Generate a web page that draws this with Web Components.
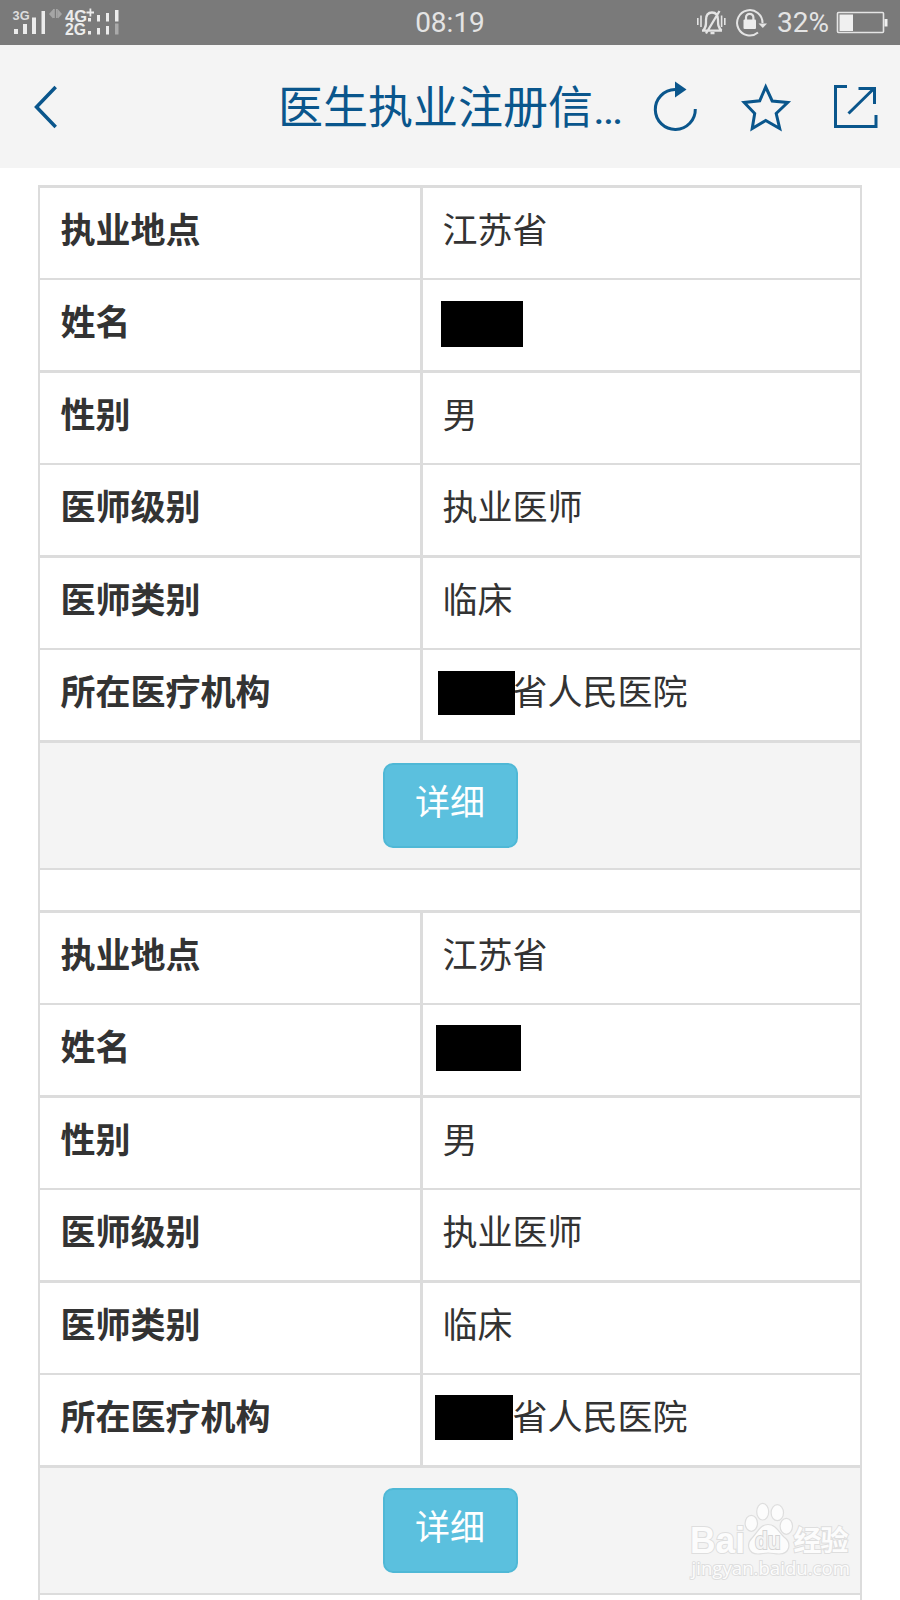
<!DOCTYPE html>
<html lang="zh-CN">
<head>
<meta charset="utf-8">
<title>医生执业注册信息</title>
<style>
html, body { margin: 0; height: 1600px; overflow: hidden; background: #fff; }
body { font-family: Roboto, "Noto Sans CJK SC", sans-serif; color: #333; }
</style>
</head>
<body>
<phone-screen>
  <status-bar slot="top" time="08:19" battery="32%"></status-bar>
  <nav-bar slot="top">医生执业注册信…</nav-bar>
  <record-list>
    <doctor-record></doctor-record>
    <doctor-record second></doctor-record>
  </record-list>
  <baidu-mark slot="mark"></baidu-mark>
</phone-screen>
<script>
class Base extends HTMLElement {
  connectedCallback() {
    if (!this.shadowRoot) this.attachShadow({ mode: 'open' }).innerHTML = this.view();
  }
}

customElements.define('phone-screen', class extends Base {
  view() { return `<style>
    :host { display: flex; flex-direction: column; width: 900px; height: 1600px; overflow: hidden; position: relative; }
    main { padding: 17px 38px 0; }
    ::slotted([slot=mark]) { position: absolute; left: 686px; top: 1500px; }
  </style><slot name="top"></slot><main><slot></slot></main><slot name="mark"></slot>`; }
});

customElements.define('status-bar', class extends Base {
  view() { return `<style>
    :host { display: grid; grid-template-columns: 1fr auto 1fr; height: 45px; flex: none; background: #7a7a7a; color: #e4e4e4; font: 28px/46px Roboto, sans-serif; }
    svg { display: block; }
    .right { display: flex; justify-content: flex-end; }
  </style>
  <svg width="200" height="45" fill="#ececec" font-family="Liberation Sans, sans-serif" font-weight="bold">
    <text x="12.600" y="20" font-size="12" textLength="17" lengthAdjust="spacingAndGlyphs" fill="#ddd">3G</text>
    <path d="M14 29h4v5h-4zM23 24h4v10h-4zM32 17.500h4v16.500h-4zM41.500 11h3.500v23h-3.500z"/>
    <path fill="#a5a5a5" d="M49 14l4-4.500v9zM53 9h1.800v9h-1.800zM56 9h1.800v9h-1.800zM58 9.500l4 4.500-4 4.500z"/>
    <text x="65" y="21.500" font-size="16" textLength="22" lengthAdjust="spacingAndGlyphs">4G</text>
    <text x="65" y="35" font-size="16" textLength="21" lengthAdjust="spacingAndGlyphs">2G</text>
    <path d="M86.500 11.500h3v-3h1.800v3h2.700v2h-2.700v3h-1.800v-3h-3zM88 18h3v3.500h-3zM88 31h3v3.500h-3zM97 15h3v6.500h-3zM97 28h3v6.500h-3zM106 13h3v8.500h-3zM106 26h3v8.500h-3zM115 10h3.500v11.500h-3.500z"/>
    <path fill="#aaa" d="M115 23.500h3.500v11h-3.500z"/>
  </svg>
  <span>${this.getAttribute('time')}</span>
  <div class="right">
    <svg width="80" height="45" fill="none" stroke="#e4e4e4" stroke-width="1.700">
      <path d="M.8 18v7M4 15.500v11.500M27.800 18v7M24.600 15.500v11.500" stroke-width="1.600"/>
      <path d="M5 30.700h20M6 30.500c3.500-3.500 3-6 3-10.500q0-7.500 6-7.500t6 7.500c0 4.500 0 7 3.500 10.500M9 33.500L22.500 11M13.500 33.200h4" stroke-width="2.300"/>
      <path d="M65.500 23a12.700 12.700 0 1 0-4.500 9.500" stroke-width="2"/>
      <path d="M61.500 23.500h8.500l-4.200 4.500z" fill="#e4e4e4" stroke="none"/>
      <path d="M49 20v-2.500a3.700 3.700 0 0 1 7.400 0v2.500" stroke-width="2.200"/>
      <rect x="46.500" y="19.500" width="12.500" height="9.500" rx="1" fill="#ececec" stroke="none"/>
    </svg>
    <span>${this.getAttribute('battery')}</span>
    <svg width="71" height="45"><rect x="8.500" y="12.500" width="46" height="20" rx="1" fill="none" stroke="#e4e4e4" stroke-width="1.600"/><path fill="#f0f0f0" d="M10.500 14.500H24v16.500H10.500zM55.500 19h3v7.500h-3z"/></svg>
  </div>`; }
});

customElements.define('nav-bar', class extends Base {
  view() { return `<style>
    :host { display: flex; height: 123px; flex: none; background: #f4f4f4; color: #0a568c; font: 45px/127px Roboto, "Noto Sans CJK SC", sans-serif; }
    svg { display: block; fill: none; stroke: #0a568c; flex: none; }
    .t { width: 352px; white-space: nowrap; }
  </style>
  <svg width="278" height="123"><path d="M55.700 42L36.500 62l19.200 20" stroke-width="3.500"/></svg>
  <div class="t"><slot></slot></div>
  <svg width="270" height="123" stroke-width="3">
    <path d="M45 44.500a20 20 0 1 0 20.300 19.500"/>
    <path d="M45 36.500v16l11.500-8z" fill="#0a568c" stroke="none"/>
    <path d="M135.700 42l6.500 14 15.500 1.500-11.500 11 3.500 15-14-8-13.500 8 2.500-15-10.500-11 15.500-1.700z"/>
    <path d="M217 41.500h-11.500v40h40.500V70M228.500 43.500h16V59M218.500 68.500L244 43.500"/>
  </svg>`; }
});

customElements.define('record-list', class extends Base {
  view() { return `<style>
    :host { display: flex; flex-direction: column; gap: 42.5px; height: 1440px; background: #fff; box-sizing: border-box; border: 2px solid #dcdcdc; border-width: 0 2px; }
  </style><slot></slot>`; }
});

customElements.define('doctor-record', class extends Base {
  view() {
    const s = this.hasAttribute('second');
    const rows = [['执业地点', '江苏省'], ['姓名', s ? 'n2' : 'n1'], ['性别', '男'], ['医师级别', '执业医师'], ['医师类别', '临床'], ['所在医疗机构', '省人民医院']];
    return `<style>
    :host { display: grid; gap: 2.5px; padding: 2.5px 0; background: #dcdcdc; margin-bottom: -2.5px; }
    .row { display: grid; grid-template-columns: 380px 1fr; gap: 2.5px; height: 90px; }
    .c { position: relative; background: #fff; box-sizing: border-box; padding: 19px 20px 0; font-size: 35px; line-height: 50px; white-space: nowrap; }
    .k { font-weight: 700; padding-left: 20.4px; }
    .org { padding-left: 90px; }
    i { position: absolute; background: #000; }
    .n1 { left: 18.5px; top: 21px; width: 82px; height: 46px; }
    .n2 { left: 13.5px; top: 20px; width: 85px; height: 46px; }
    .o1 { left: 15.5px; top: 21px; width: 77px; height: 44px; }
    .o2 { left: 12.5px; top: 20px; width: 78px; height: 45px; }
    .foot { display: flex; justify-content: center; align-items: center; height: 125px; background: #f4f4f4; }
  </style>` + rows.map(([k, v], n) => {
      const val = n === 1 ? `<i class="${v}"></i>` : n === 5 ? `<i class="${s ? 'o2' : 'o1'}"></i>${v}` : v;
      return `<div class="row"><div class="c k">${k}</div><div class="c ${n === 5 ? 'org' : ''}">${val}</div></div>`;
    }).join('') + `<div class="foot"><info-button>详细</info-button></div>`;
  }
});

customElements.define('info-button', class extends Base {
  view() { return `<style>
    :host { display: block; box-sizing: border-box; width: 135px; height: 85px; padding-top: 14px; text-align: center; border: 2px solid #4fb8d6; border-radius: 10px; background: #5bc0de; color: #fff; font-size: 35px; line-height: 50px; }
  </style><slot></slot>`; }
});

customElements.define('baidu-mark', class extends Base {
  view() { return `<style>
    :host { display: block; width: 170px; height: 90px; }
    svg { display: block; }
    text { paint-order: stroke; stroke: #dedede; stroke-width: 2px; fill: #fcfcfc; }
  </style>
  <svg width="170" height="90">
    <text x="4" y="53" font-family="Liberation Sans, sans-serif" font-weight="bold" font-size="37" textLength="55" lengthAdjust="spacingAndGlyphs">Bai</text>
    <g fill="#fcfcfc" stroke="#dedede" stroke-width="1.200">
      <ellipse cx="65.300" cy="23.300" rx="6.200" ry="8"/><ellipse cx="76.700" cy="11.700" rx="6" ry="8.300"/><ellipse cx="91.300" cy="12.700" rx="6.200" ry="8"/><ellipse cx="100.300" cy="26.300" rx="6.200" ry="8"/>
      <path d="M82 24.500c8 0 11 8 16 12.500 8 6 6 17-5 17-4 0-7-1-11-1s-6 1-10 1c-10 0-12-10-6-16 5-5 8-13.500 16-13.500z"/>
    </g>
    <text x="69" y="49" font-family="Liberation Sans, sans-serif" font-weight="bold" font-size="23" textLength="25.500" lengthAdjust="spacingAndGlyphs" style="fill:#f4f4f4;stroke:#d4d4d4">du</text>
    <text x="107.500" y="51" font-family="Noto Sans CJK SC, sans-serif" font-weight="bold" font-size="28" textLength="55">经验</text>
    <text x="5.500" y="74.500" font-family="Open Sans, sans-serif" font-size="19" textLength="158.500" lengthAdjust="spacingAndGlyphs">jingyan.baidu.com</text>
  </svg>`; }
});
</script>
</body>
</html>
